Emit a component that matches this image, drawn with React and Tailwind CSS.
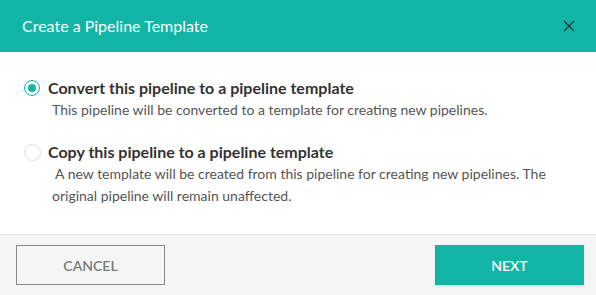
export default function App() {
  return (
    <div className="w-[596px] h-[295px] bg-white flex flex-col overflow-hidden" style={{ fontFamily: "Lato, 'Noto Sans', sans-serif" }}>
      <div className="h-[52px] shrink-0 bg-[#12b5a5] flex items-center justify-between pl-[22px] pr-[21px]">
        <span className="text-white text-[16px]">Create a Pipeline Template</span>
        <svg width="12" height="12" viewBox="0 0 12 12" className="text-[#1d3b3a]">
          <path d="M1 1 L11 11 M11 1 L1 11" stroke="currentColor" strokeWidth="1.4" fill="none" />
        </svg>
      </div>
      <div className="flex flex-col gap-[20px] pt-[25px] pb-[27px] pl-[24px] pr-[24px]">
        <div className="flex flex-col">
          <div className="flex items-center h-[22px]">
            <span className="w-[16px] h-[16px] rounded-full border-[1.5px] border-[#12b5a5] flex items-center justify-center">
              <span className="w-[8px] h-[8px] rounded-full bg-[#12b5a5]" />
            </span>
            <span className="ml-[8px] text-[16px] font-bold text-[#333]">Convert this pipeline to a pipeline template</span>
          </div>
          <p className="pl-[28px] text-[14px] leading-[22px] text-[#555]">This pipeline will be converted to a template for creating new pipelines.</p>
        </div>
        <div className="flex flex-col">
          <div className="flex items-center h-[22px]">
            <span className="w-[17px] h-[17px] rounded-full border border-[#dcdcdc]" />
            <span className="ml-[7px] text-[16px] font-bold text-[#333]">Copy this pipeline to a pipeline template</span>
          </div>
          <p className="pl-[28px] text-[14px] leading-[22px] text-[#555] w-[546px]">&nbsp;A new template will be created from this pipeline for creating new pipelines. The original pipeline will remain unaffected.</p>
        </div>
      </div>
      <div className="flex-1 bg-[#f5f5f5] border-t border-[#e8e8e8] flex justify-between items-start pt-[10px] pl-[16px] pr-[12px]">
        <button className="w-[149px] h-[40px] border border-[#888] text-[#7a7a7a] text-[14px] font-semibold">CANCEL</button>
        <button className="w-[149px] h-[40px] bg-[#12b5a5] text-white text-[14px] font-semibold shadow-[0_1px_2px_rgba(0,0,0,0.12)]">NEXT</button>
      </div>
    </div>
  );
}
